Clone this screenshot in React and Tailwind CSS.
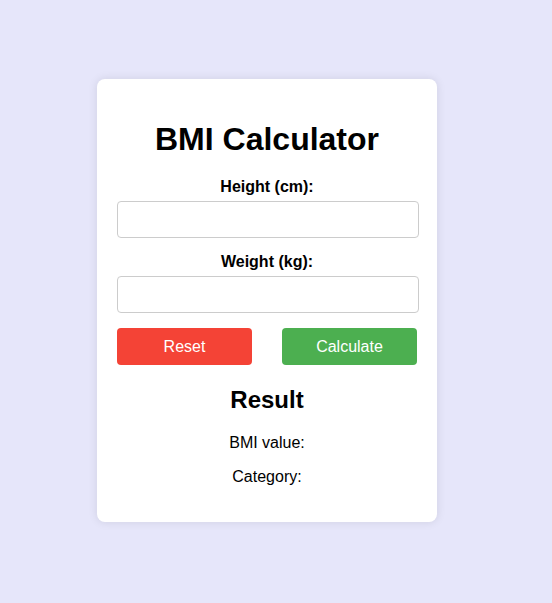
import React, { useState } from 'react';

export default function App() {
  const [height, setHeight] = useState('');
  const [weight, setWeight] = useState('');
  const [bmi, setBmi] = useState('');
  const [category, setCategory] = useState('');

  const calculate = () => {
    const h = parseFloat(height) / 100;
    const w = parseFloat(weight);
    if (!h || !w) return;
    const value = w / (h * h);
    setBmi(value.toFixed(1));
    if (value < 18.5) setCategory('Underweight');
    else if (value < 25) setCategory('Normal weight');
    else if (value < 30) setCategory('Overweight');
    else setCategory('Obese');
  };

  const reset = () => {
    setHeight('');
    setWeight('');
    setBmi('');
    setCategory('');
  };

  return (
    <div className="min-h-screen bg-[#e6e6fa] flex items-center justify-center pr-[18px] pb-[3px] font-['Liberation_Sans',Arial,sans-serif] text-black">
      <div className="w-[340px] bg-white rounded-lg p-5 shadow-[0_0_10px_rgba(0,0,0,0.1)] text-center">
        <h1 className="text-[32px] leading-[37px] font-bold mt-[22px] mb-[20px]">BMI Calculator</h1>

        {/* Inputs */}
        <div className="mb-[15px]">
          <label className="block font-bold text-base leading-[18px] mb-[5px]">Height (cm):</label>
          <input
            type="number"
            value={height}
            onChange={(e) => setHeight(e.target.value)}
            className="w-[302px] h-[37px] px-2 border border-[#ccc] rounded outline-none"
          />
        </div>
        <div className="mb-[15px]">
          <label className="block font-bold text-base leading-[18px] mb-[5px]">Weight (kg):</label>
          <input
            type="number"
            value={weight}
            onChange={(e) => setWeight(e.target.value)}
            className="w-[302px] h-[37px] px-2 border border-[#ccc] rounded outline-none"
          />
        </div>

        <div className="flex justify-between">
          <button onClick={reset} className="w-[135px] h-[37px] pt-px bg-[#f44336] text-white text-base rounded cursor-pointer">
            Reset
          </button>
          <button onClick={calculate} className="w-[135px] h-[37px] pt-px bg-[#4caf50] text-white text-base rounded cursor-pointer">
            Calculate
          </button>
        </div>

        {/* Result */}
        <h2 className="text-2xl leading-[28px] font-bold mt-[21px] mb-[20px]">Result</h2>
        <p className="text-base leading-[18px] mb-4">BMI value: {bmi}</p>
        <p className="text-base leading-[18px] mb-4">Category: {category}</p>
      </div>
    </div>
  );
}
